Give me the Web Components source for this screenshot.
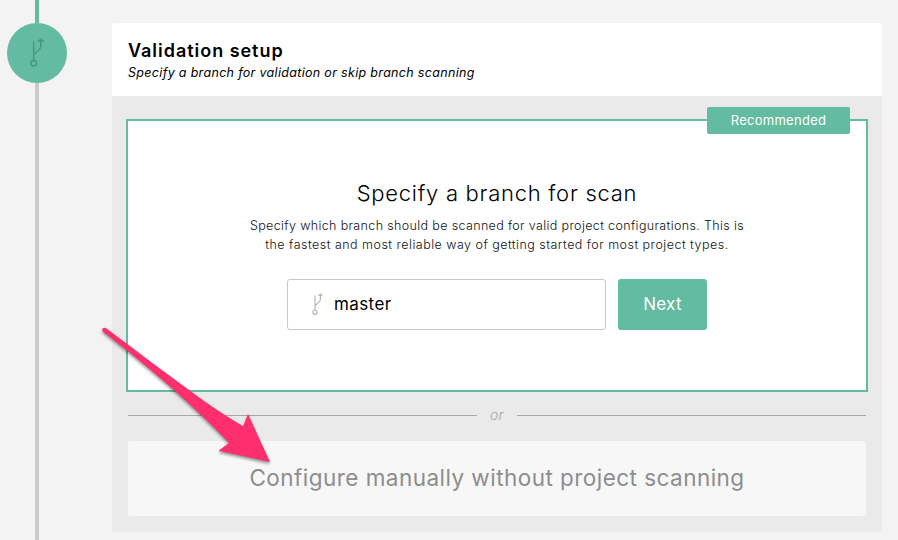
<!DOCTYPE html>
<html lang="en"><head><meta charset="utf-8"><title>Validation setup</title>
<style>
body{margin:0;width:898px;height:540px;overflow:hidden;background:#f3f3f3;color:#000;font-family:Inter,"Open Sans",sans-serif}
</style></head><body>
<setup-page>
  <step-rail slot="rail"></step-rail>
  <setup-panel>
    <text-line slot="title" style="--size:18px;--weight:600;--track:.97px;--line:22px">Validation setup</text-line>
    <text-line slot="subtitle" style="--size:12.5px;--slant:italic;--track:.32px;--line:22px">Specify a branch for validation or skip branch scanning</text-line>
    <scan-card>
      <text-line slot="badge" style="--size:13px;--track:.27px;--line:27px">Recommended</text-line>
      <text-line slot="title" style="--size:22px;--weight:300;--track:.73px;--line:32px">Specify a branch for scan</text-line>
      <text-line slot="text" style="--size:12.5px;--weight:300;--track:.36px;--line:19px">Specify which branch should be scanned for valid project configurations. This is</text-line>
      <text-line slot="text" style="--size:12.5px;--weight:300;--track:.48px;--line:19px">the fastest and most reliable way of getting started for most project types.</text-line>
      <text-line slot="branch" style="--size:17px;--track:.4px;--line:49px">master</text-line>
      <text-line slot="next" style="--size:17px;--track:.3px;--line:51px">Next</text-line>
    </scan-card>
    <or-divider><text-line style="--size:14px;--weight:300;--slant:italic;--track:.3px;--line:20px">or</text-line></or-divider>
    <manual-option><text-line style="--size:22.5px;--track:.46px;--line:74px">Configure manually without project scanning</text-line></manual-option>
  </setup-panel>
  <callout-arrow slot="overlay"></callout-arrow>
</setup-page>
<script>
const define=(name,html)=>customElements.define(name,class extends HTMLElement{
  constructor(){super();this.attachShadow({mode:'open'}).innerHTML=html}
});
define('text-line',`<style>:host{display:block;white-space:nowrap;font-size:var(--size);font-weight:var(--weight,400);font-style:var(--slant,normal);letter-spacing:var(--track,0);line-height:var(--line)}</style><slot></slot>`);
define('branch-icon',`<style>:host{display:block;flex:none}svg{display:block;width:100%;height:100%}</style>
<svg viewBox="0 0 14 30" fill="none" stroke="currentColor" stroke-width="1.5"><circle cx="3.7" cy="25.2" r="2.7"/><path d="M3.7 3.2V22.5M3.7 16.8L9.5 11.3Q10.8 10 10.8 8.2V1.6M7.9 3.7L10.8 1.3L13.7 3.7"/></svg>`);
define('setup-page',`<style>:host{display:grid;position:relative;grid-template-columns:112px 770px;height:540px}.main{padding-top:23px}</style><slot name="rail"></slot><div class="main"><slot></slot></div><slot name="overlay"></slot>`);
define('step-rail',`<style>:host{display:flex;flex-direction:column;align-items:center;width:74px;height:540px}
.done{width:4px;height:23px;background:#63bba1}.todo{width:4px;flex:1;background:#cacaca}.dot{width:60px;height:60px;border-radius:50%;background:#63bba1;display:grid;place-items:center;color:#479680}branch-icon{width:14px;height:30px}</style>
<div class="done"></div><div class="dot"><branch-icon></branch-icon></div><div class="todo"></div>`);
define('setup-panel',`<style>:host{display:block;height:509px;background:#eaeaea;border-radius:3px;overflow:hidden}header{height:73px;box-sizing:border-box;background:#fff;padding:17px 16px 0}.body{padding:23px 14px 0}</style>
<header><slot name="title"></slot><slot name="subtitle"></slot></header><div class="body"><slot></slot></div>`);
define('scan-card',`<style>:host{display:flex;flex-direction:column;align-items:center;position:relative;box-sizing:border-box;height:273px;border:2px solid #63bba1;background:#fff;padding-top:56px}
.badge{position:absolute;top:-14px;right:16px;width:143px;height:27px;display:flex;justify-content:center;background:#63bba1;color:#fff;border-radius:2px}
.copy{display:flex;flex-direction:column;align-items:center;margin-top:7px;color:#111}
.row{display:flex;gap:12px;margin-top:25px}.field{width:319px;height:51px;box-sizing:border-box;border:1px solid #c8c8c8;border-radius:3px;padding-left:24px;display:flex;align-items:center;gap:11px}
branch-icon{width:11px;height:23px;color:#b4b4b4}.next{width:89px;height:51px;border-radius:3px;background:#63bba1;color:#fff;display:flex;justify-content:center}</style>
<div class="badge"><slot name="badge"></slot></div><slot name="title"></slot><div class="copy"><slot name="text"></slot></div>
<div class="row"><div class="field"><branch-icon></branch-icon><slot name="branch"></slot></div><div class="next"><slot name="next"></slot></div></div>`);
define('or-divider',`<style>:host{display:flex;align-items:flex-start;height:49px;padding:0 2px;box-sizing:border-box;color:#a3a3a3}i{flex:1;height:1px;background:#a8a8a8;margin-top:23px}.word{width:40px;display:flex;justify-content:center;padding-top:13px}</style><i></i><div class="word"><slot></slot></div><i></i>`);
define('manual-option',`<style>:host{display:flex;justify-content:center;margin:0 2px;height:75px;background:#f7f7f7;border-radius:3px;color:#8d8d8d}</style><slot></slot>`);
define('callout-arrow',`<style>:host{position:absolute;left:95px;top:320px;width:185px;height:155px;pointer-events:none}svg{display:block;overflow:visible;filter:drop-shadow(0 2px 1.5px rgba(0,0,0,.42))}</style>
<svg width="185" height="155" viewBox="95 320 185 155"><path fill="#ff2f6d" d="M106.500 328.600L128.300 344.800L150 361.200L190 390.700Q215 409.500 243.200 426.300L248 414L270 462L218.500 450.800L229 443Q214 427 190 404.500Q150 368 102.500 331.300Q101.500 327.800 104.500 327.800Q105.600 327.900 106.500 328.600Z"/></svg>`);
</script></body></html>
